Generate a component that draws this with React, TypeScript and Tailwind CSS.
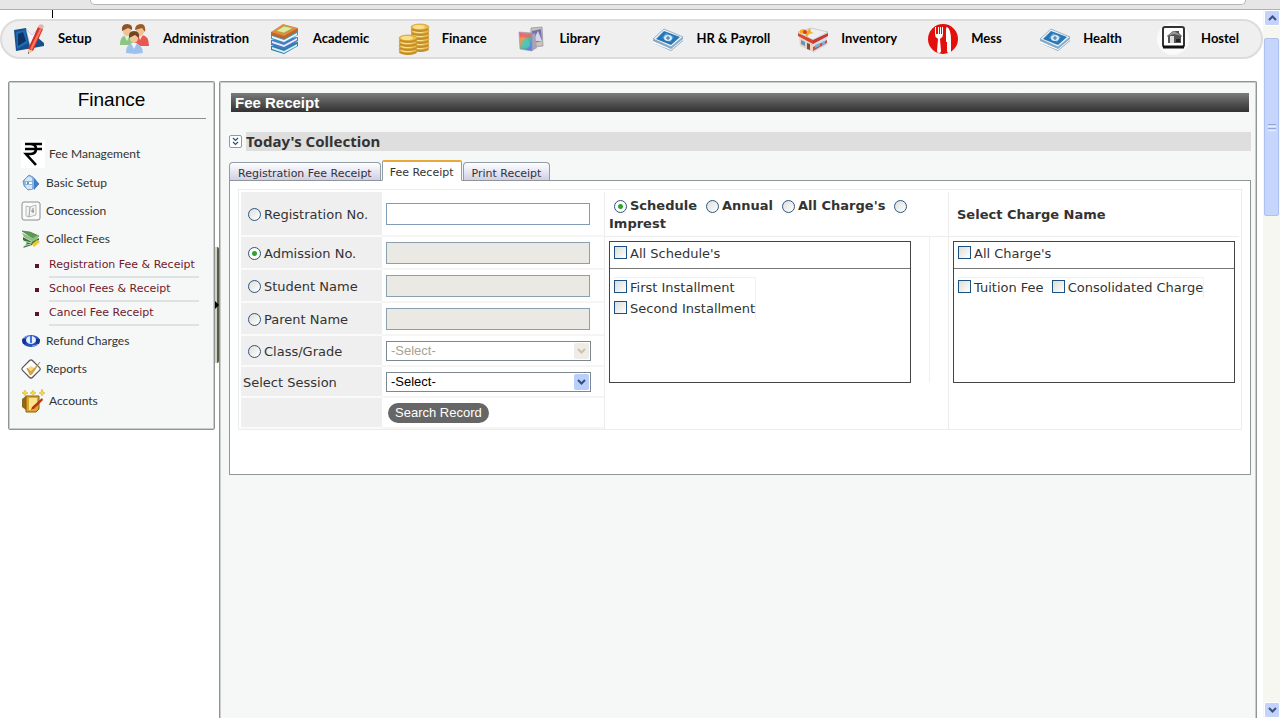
import { useState } from "react"
import type { ReactNode } from "react"

// ---------- Top menu icons ----------

const SetupIcon = () => (
  <svg viewBox="0 0 32 32" className="h-8 w-8">
    <path d="M0 7 12 5l3 10 8-1 7 6v3L2 28z" fill="#164f8b" />
    <path d="M2 9 11 7l3 13-11 6z" fill="#1d6cb4" />
    <path d="M4 11 9 9l3 9-8 5z" fill="#0d3465" />
    <path d="M12 6 18 12l6-6-8 17z" fill="#f5f7fb" stroke="#a4b0c8" strokeWidth=".5" />
    <path d="M24 4 29 6 19 28 14 26z" fill="#d62c22" />
    <path d="M26 5 28 6 18 27 16 26z" fill="#f27b66" />
    <path d="M14 26 19 28 14 31z" fill="#e8c7a0" />
    <path d="M14 29 15 30 14 31z" fill="#222" />
    <path d="M25 2q3-2 5 1l-1 3-5-2z" fill="#e8b1a9" />
  </svg>
)

const PeopleIcon = () => (
  <svg viewBox="0 0 32 32" className="h-8 w-8">
    <path d="M1 22q0-10 7-10 7 0 8 10z" fill="#8cc780" />
    <path d="M14 23q1-11 8-11 8 0 8 11z" fill="#e8584f" />
    <path d="m5 12 3 6 3-6z" fill="#dff1d9" />
    <path d="m19 12 2 5 3-5z" fill="#fbdad4" />
    <ellipse cx="8" cy="8" rx="4" ry="5" fill="#eec295" />
    <path d="M3 8Q2 1 8 1q6 0 5 6l-4-2z" fill="#8a5527" />
    <ellipse cx="21" cy="8" rx="4" ry="5" fill="#eec295" />
    <path d="M16 7q0-6 6-6 5 0 4 8l-3-4z" fill="#9b5b24" />
    <path d="M7 30q0-10 8-10t9 10l-8 1z" fill="#9dc1ec" />
    <path d="m12 20 3 6 3-6z" fill="#eef5ff" />
    <ellipse cx="15" cy="15" rx="4" ry="5" fill="#f0c79d" />
    <path d="M10 15q-1-7 5-7t5 7l-4-3z" fill="#704522" />
  </svg>
)

const BooksIcon = () => (
  <svg viewBox="0 0 32 32" className="h-8 w-8">
    <path d="M2 23v4l13 4 14-8v-4z" fill="#2e7fa8" />
    <path d="m3 24 12 4 13-7v2l-13 7-12-4z" fill="#d9eef5" />
    <path d="M2 17v5l13 4 14-8v-4z" fill="#4a78c4" />
    <path d="m3 18 12 4 13-7v2l-13 7-12-4z" fill="#e5effb" />
    <path d="M2 11v5l13 4 14-8V8z" fill="#3b9bb8" />
    <path d="m3 13 12 4 13-7v2l-13 7-12-4z" fill="#f2f6fb" />
    <path d="M2 9v3l13 4 14-8V5z" fill="#c0652b" />
    <path d="M2 9 14 1l15 4-14 8z" fill="#e58a3c" />
    <path d="m7 8 8-5 9 2-9 5z" fill="#dfe9a2" stroke="#8aa848" strokeWidth=".6" />
  </svg>
)

function CoinStack({ x, y, count }: { x: number; y: number; count: number }) {
  return (
    <g>
      {Array.from({ length: count }, (_, i) => {
        const cy = y + (count - 1 - i) * 4
        return (
          <g key={i}>
            <ellipse cx={x} cy={cy + 2} rx="9" ry="3" fill="#c08c2c" />
            <ellipse cx={x} cy={cy} rx="9" ry="3" fill="#ecbb48" stroke="#c8942a" strokeWidth=".6" />
            <ellipse cx={x - 1} cy={cy} rx="6" ry="2" fill="#fae08c" />
          </g>
        )
      })}
    </g>
  )
}

const CoinsIcon = () => (
  <svg viewBox="0 0 32 32" className="h-8 w-8">
    <CoinStack x={22} y={4} count={6} />
    <CoinStack x={10} y={15} count={4} />
  </svg>
)

const LibraryIcon = () => (
  <svg viewBox="0 0 32 32" className="h-8 w-8">
    <defs>
      <linearGradient id="cover" x1="0" y1="0" x2="1" y2="1">
        <stop offset="0" stopColor="#e76a8c" />
        <stop offset=".3" stopColor="#ee9a55" />
        <stop offset=".55" stopColor="#58c08c" />
        <stop offset=".8" stopColor="#4e8ee0" />
        <stop offset="1" stopColor="#9c5fd0" />
      </linearGradient>
    </defs>
    <path d="M15 5 26 4l1 19-12 1z" fill="#c9c4b6" stroke="#8f8a9c" strokeWidth=".7" />
    <path d="m16 8 9-2 1 12-9 2z" fill="#7672ae" />
    <path d="m17 18 5-10 4 10z" fill="#d3d5ea" />
    <path d="m15 12 4-2 2 15-5 3z" fill="#a9a3ba" />
    <path d="M3 9 16 10v18L4 26z" fill="url(#cover)" stroke="#9a8fae" strokeWidth=".6" />
    <path d="M4 10 15 11v4l-11-1z" fill="#e95c72" opacity=".7" />
    <circle cx="10" cy="21" r="4" fill="#50c9c4" opacity=".7" />
  </svg>
)

const CashIcon = () => (
  <svg viewBox="0 0 32 32" className="h-8 w-8">
    <path d="M1 17 12 7l19 8v3L19 28 1 20z" fill="#88aac6" />
    <path d="m1 18 18 8 12-10v1L19 27 1 20z" fill="#fff" />
    <path d="M1 16 12 6l19 8-12 10z" fill="#e9f3fa" stroke="#7698b5" strokeWidth=".7" />
    <path d="M4 16 12 8l16 6-9 8z" fill="#2877b4" />
    <path d="m10 15 4-5 8 4-4 5z" fill="#5da1d2" />
    <ellipse cx="16" cy="15" rx="4" ry="3" fill="#d8ebf7" />
    <path d="M14 15h4m-2-2v4" stroke="#2f75aa" />
  </svg>
)

const StoreIcon = () => (
  <svg viewBox="0 0 32 32" className="h-8 w-8">
    <path d="M2 14 16 19v10L3 23z" fill="#e5d4c4" />
    <path d="M16 19 30 13v9l-14 8z" fill="#d5dde6" />
    <path d="M1 9 14 5l17 4-15 8z" fill="#eceef1" stroke="#b5b5b8" strokeWidth=".6" />
    <path d="m1 10 15 7v4L1 13z" fill="#d9452f" />
    <path d="m16 17 15-7v3l-15 8z" fill="#c23b36" />
    <path d="m16 24 14-7v3l-14 8z" fill="#c94f48" />
    <path d="m4 17 4 2v4l-4-2z" fill="#5a96c4" />
    <path d="m10 20 3 1v6l-3-1z" fill="#8b4a32" />
    <path d="m18 22 5-2v3l-5 2zM25 19l3-1v3l-3 1z" fill="#79b3da" />
    <path d="m3 7 4-1 2 3 4-4 1 4 3 1-5 1-2 3-2-3-5-1z" fill="#f0ad24" />
    <circle cx="8" cy="9" r="2" fill="#dd3a1e" />
  </svg>
)

const MessIcon = () => (
  <svg viewBox="0 0 32 32" className="h-8 w-8">
    <circle cx="16" cy="16" r="15" fill="#e30f0b" />
    <path
      d="M8 4v7q0 3 2 4l1 1-1 12q0 2 2 2t2-2l-1-12 1-1q2-1 2-4V4h-1v7h-1V4h-1v7h-1V4h-1v7H9V4z"
      fill="#fff"
    />
    <path d="M20 4q4 2 4 13v11q0 2-2 2t-2-2V19h-1V6q0-2 1-2z" fill="#fff" />
  </svg>
)

const HostelIcon = () => (
  <svg viewBox="0 0 32 32" className="h-8 w-8">
    <circle cx="16" cy="16" r="16" fill="#fafafa" />
    <rect x="6" y="4" width="21" height="20" rx="2" fill="#fff" stroke="#333" strokeWidth="2" />
    <path d="M6 24h21" stroke="#111" strokeWidth="3" />
    <path d="M10 13 16 8h6v2l3 3-1 1v6H11v-6z" fill="#555" />
    <path d="m10 13 7-5 8 5-8-2z" fill="#999" />
    <path d="M13 13h4v7h-4z" fill="#ddd" />
    <path d="M19 16h4v3h-4z" fill="#222" />
  </svg>
)

// ---------- Side menu icons ----------

const RupeeIcon = () => (
  <svg viewBox="0 0 24 28" className="h-7 w-6">
    <path d="M0 0h24v28H0z" fill="#fff" />
    <path d="M4 4h17M4 9h17M6 4h3q6 0 6 5t-6 5H5l10 11" fill="none" stroke="#000" strokeWidth="2.6" />
  </svg>
)

const BasicSetupIcon = () => (
  <svg viewBox="0 0 20 20" className="h-5 w-5">
    <path d="M2 8 8 2l4 2 6 7-6 5-5 1-4-4z" fill="#8db3e0" stroke="#5680b8" strokeWidth=".7" />
    <path d="m13 5 5 6-5 6z" fill="#3f7fc4" />
    <path d="M4 7q4-6 7-2v3H4zM4 12h7v4H6z" fill="#d5e6f7" />
    <path d="M5 10h6" stroke="#fff" strokeWidth="2" />
    <circle cx="7" cy="10" r="1" fill="#3b6faa" />
  </svg>
)

const ConcessionIcon = () => (
  <svg viewBox="0 0 20 20" className="h-5 w-5">
    <rect x="1" y="1" width="18" height="18" rx="2" fill="#fbfbfb" stroke="#8c8c8c" />
    <path d="m5 5 4 1-1 10-3-1zM9 6l6-2v10l-7 2z" fill="#f3f3f3" stroke="#aaa" strokeWidth=".8" />
    <path d="M12 7v5M10 10h3" stroke="#888" />
  </svg>
)

const CollectIcon = () => (
  <svg viewBox="0 0 20 20" className="h-5 w-5">
    <path d="M1 2l8 1 9 4-5 3z" fill="#5d9a53" stroke="#326b32" strokeWidth=".6" />
    <path d="m1 4 11 5 5-3v3l-5 4L3 8z" fill="#91bd82" />
    <path d="m2 8 9 5 7-4v2l-7 5-9 3 4-5-4-3z" fill="#35713b" />
    <path d="m2 12 9 2M2 17l8-2" stroke="#cde3c5" />
    <path d="m11 15 5-4 3 2-6 5z" fill="#efc62e" />
  </svg>
)

const RefundIcon = () => (
  <svg viewBox="0 0 20 20" className="h-5 w-5">
    <ellipse cx="10" cy="10" rx="9" ry="6" fill="#2950b8" />
    <ellipse cx="10" cy="9" rx="5" ry="4" fill="#e7eefc" />
    <path d="M1 8h4v5H2zM15 8h4l-1 5h-3z" fill="#15358e" />
    <path d="M9 5h2v7H9z" fill="#3f74dd" />
    <path d="M3 7q3-3 6-2M11 15q4 0 6-2" stroke="#86adf4" fill="none" />
  </svg>
)

const ReportsIcon = () => (
  <svg viewBox="0 0 20 20" className="h-5 w-5">
    <rect x="3" y="3" width="14" height="14" rx="2" transform="rotate(45 10 10)" fill="#fff" stroke="#555" strokeWidth="1.2" />
    <path d="m5 10 5-3 5 3-5 6z" fill="#f8d789" />
    <path d="m6 9 4 4 9-10-8 12-2 1z" fill="#eea72c" stroke="#8a6b38" strokeWidth=".4" />
  </svg>
)

const AccountsIcon = () => (
  <svg viewBox="0 0 24 24" className="h-6 w-6">
    <path d="M1 10 5 7v14l-4-3z" fill="#8e6a1c" />
    <path d="M5 7h13v13l-3 3H5z" fill="#dfa729" stroke="#8b5c13" />
    <path d="M8 9h8v8l-4 4H8z" fill="#fae58b" />
    <path d="m11 18 10-9 1 2-9 9-3 1z" fill="#b8331a" />
    <path
      d="m4 1 1 2 2 1-2 1-1 2-1-2-2-1 2-1zM12 1l1 2 2 1-2 1-1 1-1-1-2-1 2-1zM21 0l1 3 2 1-2 1-1 2-1-2-2-1 2-1z"
      fill="#f5dd34"
      stroke="#b99b1e"
      strokeWidth=".4"
    />
  </svg>
)

const topMenu = [
  { label: "Setup", icon: SetupIcon },
  { label: "Administration", icon: PeopleIcon },
  { label: "Academic", icon: BooksIcon },
  { label: "Finance", icon: CoinsIcon },
  { label: "Library", icon: LibraryIcon },
  { label: "HR & Payroll", icon: CashIcon },
  { label: "Inventory", icon: StoreIcon },
  { label: "Mess", icon: MessIcon },
  { label: "Health", icon: CashIcon },
  { label: "Hostel", icon: HostelIcon },
]

const tabs = ["Registration Fee Receipt", "Fee Receipt", "Print Receipt"]

const searchFields = [
  { id: "admission", label: "Admission No." },
  { id: "student", label: "Student Name" },
  { id: "parent", label: "Parent Name" },
]

// ---------- Small controls ----------

type RadioProps = { id: string; name: string; checked: boolean; onChange: () => void; label?: string }

function Radio({ id, name, checked, onChange, label }: RadioProps) {
  return (
    <input
      type="radio"
      id={id}
      name={name}
      aria-label={label}
      checked={checked}
      onChange={onChange}
      className="h-[13px] w-[13px] shrink-0 appearance-none rounded-full border border-[#2c5580] bg-[linear-gradient(135deg,#dedfdb,#ffffff)] checked:bg-[radial-gradient(circle,#2fa32b_0_2px,#ffffff_3px)]"
    />
  )
}

function CheckField({ label }: { label: string }) {
  return (
    <label className="flex items-start gap-[3px] leading-5 whitespace-nowrap">
      <input
        type="checkbox"
        className="mt-[2px] h-[13px] w-[13px] shrink-0 appearance-none border border-[#1c5180] bg-[linear-gradient(135deg,#dcdcd7,#ffffff)] checked:bg-[#21a121]"
      />
      {label}
    </label>
  )
}

function SelectBox({ id, disabled }: { id: string; disabled?: boolean }) {
  return (
    <div className="relative w-[205px]">
      <select
        id={id}
        disabled={disabled}
        className="block h-5 w-full appearance-none border border-[#7c8790] bg-white pl-1 font-['Liberation_Sans',sans-serif] text-[13px] leading-4 text-black disabled:text-[#a5a394] disabled:opacity-100"
      >
        <option>-Select-</option>
      </select>
      <span
        className={
          disabled
            ? "pointer-events-none absolute top-[2px] right-[2px] flex h-4 w-[15px] items-center justify-center rounded-xs bg-[#efede3] text-[#c5c3b4]"
            : "pointer-events-none absolute top-[2px] right-[2px] flex h-4 w-[15px] items-center justify-center rounded-xs bg-[#b9cefa] text-[#334f7c]"
        }
      >
        <svg viewBox="0 0 9 6" className="h-[6px] w-[9px]">
          <path d="m1 1 3.5 3.5L8 1" fill="none" stroke="currentColor" strokeWidth="2" />
        </svg>
      </span>
    </div>
  )
}

const rowHeights = {
  tall: "flex h-[45px]",
  normal: "flex h-[33px]",
  short: "flex h-[31px]",
}

function FieldRow({
  label,
  children,
  size = "normal",
}: {
  label: ReactNode
  children: ReactNode
  size?: keyof typeof rowHeights
}) {
  return (
    <div className={rowHeights[size]}>
      <div className="flex w-[141px] shrink-0 items-center border-b-2 border-[#fafafa] bg-[#efefef] pt-[2px]">{label}</div>
      <div className="flex flex-1 items-center border-b-2 border-[#f5f5f5] pl-1">{children}</div>
    </div>
  )
}

function SideItem({ icon, children }: { icon: ReactNode; children: ReactNode }) {
  return (
    <a href="#" className="flex h-7 items-center gap-[5px]">
      {icon}
      {children}
    </a>
  )
}

function ScrollButton({ up }: { up?: boolean }) {
  return (
    <button
      type="button"
      aria-label={up ? "Scroll up" : "Scroll down"}
      className="flex h-4 w-full items-center justify-center rounded-xs border border-white bg-[#c3d3fb] text-[#3c5183]"
    >
      <svg viewBox="0 0 9 6" className="h-[6px] w-[9px]">
        <path d={up ? "m1 5 3.5-3.5L8 5" : "m1 1 3.5 3.5L8 1"} fill="none" stroke="currentColor" strokeWidth="2" />
      </svg>
    </button>
  )
}

function TopMenu() {
  return (
    <nav className="grid h-10 grid-cols-[105fr_150fr_129fr_118fr_137fr_145fr_130fr_112fr_118fr_104fr] items-center rounded-full border-2 border-[#dcdcdc] bg-[#efefef] pl-3 font-['Lato',sans-serif]">
      {topMenu.map((item) => (
        <a
          key={item.label}
          href="#"
          className="flex items-center gap-3 text-[13px] font-bold whitespace-nowrap text-black"
        >
          <item.icon />
          {item.label}
        </a>
      ))}
    </nav>
  )
}

function Sidebar() {
  return (
    <aside className="w-[207px] shrink-0 rounded-xs border border-[#8f9593] bg-[#f5f8f7] px-2 pt-px pb-[10px] font-['Lato',sans-serif] text-xs text-[#333] inset-ring inset-ring-[#c9cecb]">
      <h2 className="border-b border-[#8a908d] pt-[3px] pb-1 text-center font-['Liberation_Sans',sans-serif] text-[19px] leading-7 text-black">
        Finance
      </h2>
      <div className="flex flex-col pt-5 pl-1">
        <a href="#" className="flex h-[30px] items-center gap-1">
          <RupeeIcon />
          Fee Management
        </a>
        <SideItem icon={<BasicSetupIcon />}>Basic Setup</SideItem>
        <SideItem icon={<ConcessionIcon />}>Concession</SideItem>
        <SideItem icon={<CollectIcon />}>Collect Fees</SideItem>
        <ul className="py-px pr-[7px] pl-[14px] font-['DejaVu_Sans',sans-serif] text-[11px] text-[#71192b]">
          {["Registration Fee & Receipt", "School Fees & Receipt", "Cancel Fee Receipt"].map((text) => (
            <li key={text} className="flex h-6 items-center gap-[10px]">
              <span className="h-1 w-1 shrink-0 bg-[#5e1526]" />
              <a href="#" className="flex-1 border-b-2 border-[#dde2e2] leading-[22px] whitespace-nowrap">
                {text}
              </a>
            </li>
          ))}
        </ul>
        <SideItem icon={<RefundIcon />}>Refund Charges</SideItem>
        <SideItem icon={<ReportsIcon />}>Reports</SideItem>
        <a href="#" className="flex h-9 items-center gap-1">
          <AccountsIcon />
          Accounts
        </a>
      </div>
    </aside>
  )
}

function SearchForm() {
  const [searchBy, setSearchBy] = useState("admission")

  return (
    <div className="w-[364px] shrink-0 border-r border-[#ececec]">
      <FieldRow
        size="tall"
        label={
          <label htmlFor="registration-value" className="flex items-center gap-[3px] pl-[7px]">
            <Radio
              id="registration"
              name="search-by"
              label="Search by registration no."
              checked={searchBy === "registration"}
              onChange={() => setSearchBy("registration")}
            />
            Registration No.
          </label>
        }
      >
        <input id="registration-value" type="text" className="h-[22px] w-[204px] border border-[#7f9db9] bg-white px-1" />
      </FieldRow>
      {searchFields.map((field) => (
        <FieldRow
          key={field.id}
          label={
            <label htmlFor={field.id + "-value"} className="flex items-center gap-[3px] pl-[7px]">
              <Radio
                id={field.id}
                name="search-by"
                label={"Search by " + field.label}
                checked={searchBy === field.id}
                onChange={() => setSearchBy(field.id)}
              />
              {field.label}
            </label>
          }
        >
          <input
            id={field.id + "-value"}
            type="text"
            disabled
            className="h-[22px] w-[204px] border border-[#8a9fb0] bg-[#ebe9e3] px-1"
          />
        </FieldRow>
      ))}
      <FieldRow
        size="short"
        label={
          <label htmlFor="class-value" className="flex items-center gap-[3px] pl-[7px]">
            <Radio
              id="class"
              name="search-by"
              label="Search by class"
              checked={searchBy === "class"}
              onChange={() => setSearchBy("class")}
            />
            Class/Grade
          </label>
        }
      >
        <SelectBox id="class-value" disabled />
      </FieldRow>
      <FieldRow
        size="short"
        label={
          <label htmlFor="session" className="pl-[2px]">
            Select Session
          </label>
        }
      >
        <SelectBox id="session" />
      </FieldRow>
      <FieldRow size="short" label={null}>
        <button
          type="button"
          className="ml-[2px] h-5 rounded-full bg-[#666] px-[7px] font-['Liberation_Sans',sans-serif] text-[13px] leading-5 text-white"
        >
          Search Record
        </button>
      </FieldRow>
    </div>
  )
}

function ChargeTypes() {
  const [type, setType] = useState("Schedule")

  return (
    <fieldset className="flex flex-wrap items-center gap-x-[9px] border-b border-[#ececec] pt-[5px] pb-[3px] pl-1 font-bold">
      {["Schedule", "Annual", "All Charge's"].map((name) => (
        <label key={name} className="flex items-center gap-[3px] leading-[18px] first:pl-[5px]">
          <Radio id={name} name="charge-type" checked={type === name} onChange={() => setType(name)} />
          {name}
        </label>
      ))}
      <Radio id="imprest" name="charge-type" checked={type === "Imprest"} onChange={() => setType("Imprest")} />
      <label htmlFor="imprest" className="w-full leading-[18px]">
        Imprest
      </label>
    </fieldset>
  )
}

function FeeReceiptPanel() {
  return (
    <section className="border border-[#909696] bg-white px-2 pt-2 pb-11">
      <div className="flex border border-[#ececec] px-[2px] pt-[2px]">
        <SearchForm />
        <div className="flex min-w-0 flex-1 flex-col">
          <ChargeTypes />
          <div className="mr-[18px] border-r border-[#f0f0f0] pt-1 pr-[18px] pl-1">
            <div className="h-[142px] border border-[#444]">
              <div className="flex h-[27px] items-start border-b border-[#777] pt-[2px] pl-1">
                <CheckField label="All Schedule's" />
              </div>
              <div className="flex flex-col items-start pt-2 pl-1">
                <div className="flex flex-col gap-px border-t border-r border-[#f0f0f0]">
                  <CheckField label="First Installment" />
                  <CheckField label="Second Installment" />
                </div>
              </div>
            </div>
          </div>
        </div>
        <div className="flex w-[291px] shrink-0 flex-col border-l border-[#ececec]">
          <div className="flex h-[45px] items-center border-b border-[#ececec] pt-px pl-2 font-bold">
            Select Charge Name
          </div>
          <div className="pt-1 pr-1 pl-1">
            <div className="h-[142px] border border-[#444]">
              <div className="flex h-[27px] items-start border-b border-[#777] pt-[2px] pl-1">
                <CheckField label="All Charge's" />
              </div>
              <div className="flex pt-2 pl-1">
                <div className="flex gap-2 border-t border-r border-[#f0f0f0]">
                  <CheckField label="Tuition Fee" />
                  <CheckField label="Consolidated Charge" />
                </div>
              </div>
            </div>
          </div>
        </div>
      </div>
    </section>
  )
}

function MainPanel() {
  const [active, setActive] = useState("Fee Receipt")

  return (
    <main className="min-w-0 flex-1 rounded-t-xs border border-b-0 border-[#8f9593] bg-[#f5f8f7] pt-[11px] pr-[5px] pl-[9px] text-[#333] shadow-[inset_1px_1px_#c9cecb,inset_-1px_0_#c9cecb]">
      <h1 className="mx-[2px] h-[19px] bg-linear-to-b from-[#7b7b7b] to-[#323232] pl-1 font-['Liberation_Sans',sans-serif] text-[15px] leading-[19px] font-bold text-white">
        Fee Receipt
      </h1>
      <div className="mt-5 flex h-[19px] items-center gap-1">
        <button
          type="button"
          aria-label="Collapse"
          className="flex h-[13px] w-[13px] items-center justify-center rounded-xs border border-[#7aa0c0] bg-white"
        >
          <svg viewBox="0 0 9 9" className="h-[9px] w-[9px]">
            <path d="m2 1 2.5 2.5L7 1M2 5l2.5 2.5L7 5" fill="none" stroke="#24527c" strokeWidth="1.2" />
          </svg>
        </button>
        <h2 className="h-full flex-1 bg-[#dedede] font-['Noto_Sans',sans-serif] text-[15px] leading-[19px] font-bold">
          Today's Collection
        </h2>
      </div>
      <div role="tablist" className="mt-[9px] flex items-end gap-px text-[11px]">
        {tabs.map((tab) => (
          <button
            key={tab}
            type="button"
            role="tab"
            aria-selected={tab === active}
            onClick={() => setActive(tab)}
            className={
              tab === active
                ? "relative -mb-px h-[21px] rounded-t-xs border border-t-2 border-[#909da6] border-t-[#e9a93a] border-b-white bg-white px-[7px] pt-px leading-5"
                : "h-[18px] rounded-t-sm border border-b-0 border-[#909da6] bg-linear-to-b from-white to-[#cfcfe8] px-2 pt-px leading-5"
            }
          >
            {tab}
          </button>
        ))}
      </div>
      <FeeReceiptPanel />
    </main>
  )
}

export default function App() {
  return (
    <div className="flex min-h-screen flex-col bg-white font-['DejaVu_Sans',sans-serif] text-[13px]">
      {/* Browser chrome */}
      <div className="flex h-[10px] items-start border-b border-[#b0b0b0] bg-[#e6e6e6] pr-[34px] pl-[90px]">
        <div className="h-[5px] flex-1 rounded-b-md border border-t-0 border-[#b5b5b5] bg-white" />
      </div>

      <div className="flex flex-1">
        <div className="flex min-w-0 flex-1 flex-col">
          <div className="flex h-[9px] pl-[52px]">
            <span className="h-2 w-px bg-black" />
          </div>
          <TopMenu />
          <div className="mt-[22px] flex flex-1 items-start pr-[6px] pl-2">
            <Sidebar />
            {/* Sidebar splitter */}
            <div className="mt-[166px] flex h-[116px] w-1 shrink-0 items-center rounded-r-xs border-r-2 border-[#5a584c] bg-[#d3d0c4]">
              <svg viewBox="0 0 4 8" className="h-2 w-1 shrink-0">
                <path d="m0 0 4 4-4 4z" fill="#000" />
              </svg>
            </div>
            <div className="flex min-w-0 flex-1 self-stretch">
              <MainPanel />
            </div>
          </div>
        </div>

        {/* Page scrollbar */}
        <div className="flex w-[17px] shrink-0 flex-col bg-[#f7f7f2] pl-px">
          <ScrollButton up />
          <div className="mt-3 flex h-[178px] w-[15px] flex-col items-center justify-center gap-px rounded-xs border border-[#adc0f0] bg-[#c5d5fc]">
            <span className="h-px w-2 bg-[#8fa9e6]" />
            <span className="h-px w-2 bg-[#eef3ff]" />
            <span className="h-px w-2 bg-[#8fa9e6]" />
            <span className="h-px w-2 bg-[#eef3ff]" />
          </div>
          <div className="flex-1" />
          <ScrollButton />
        </div>
      </div>
    </div>
  )
}
